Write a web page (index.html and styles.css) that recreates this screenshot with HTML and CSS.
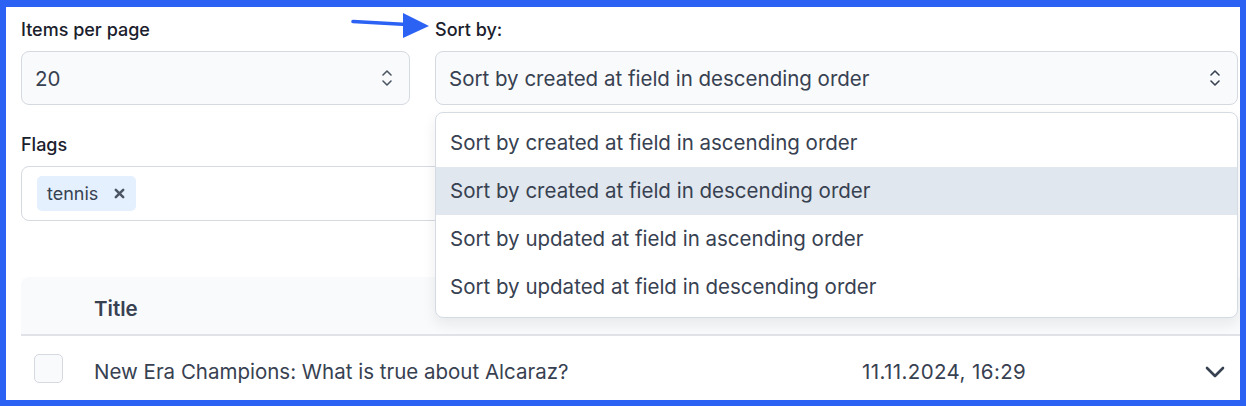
FILE: index.html
```html
<!DOCTYPE html>
<html lang="en">
<head>
<meta charset="utf-8">
<title>Sort options</title>
<link rel="stylesheet" href="styles.css">
</head>
<body>
<div class="frame">
  <div class="top">
    <div class="field">
      <label class="label">Items per page</label>
      <div class="select">
        <span class="select-value small">20</span>
        <svg class="updown" width="12" height="20" viewBox="0 0 12 20"><path d="M2 7 L6 3 L10 7 M2 13 L6 17 L10 13" fill="none" stroke="#4b5563" stroke-width="1.6" stroke-linecap="round" stroke-linejoin="round"/></svg>
      </div>
    </div>
    <div class="field">
      <label class="label">Sort by:</label>
      <div class="select">
        <span class="select-value">Sort by created at field in descending order</span>
        <svg class="updown" width="12" height="20" viewBox="0 0 12 20"><path d="M2 7 L6 3 L10 7 M2 13 L6 17 L10 13" fill="none" stroke="#374151" stroke-width="1.6" stroke-linecap="round" stroke-linejoin="round"/></svg>
      </div>
      <ul class="menu">
        <li class="opt">Sort by created at field in ascending order</li>
        <li class="opt active">Sort by created at field in descending order</li>
        <li class="opt">Sort by updated at field in ascending order</li>
        <li class="opt">Sort by updated at field in descending order</li>
      </ul>
    </div>
  </div>

  <div class="field flags">
    <label class="label">Flags</label>
    <div class="tags">
      <span class="chip">tennis<span class="chip-x">
        <svg width="11" height="11" viewBox="0 0 11 11"><path d="M1.8 1.8 L9.2 9.2 M9.2 1.8 L1.8 9.2" stroke="#4b5563" stroke-width="2.5" stroke-linecap="round"/></svg>
      </span></span>
    </div>
  </div>

  <div class="table">
    <div class="thead">
      <div class="cell-check"></div>
      <div class="th">Title</div>
    </div>
    <div class="trow">
      <div class="cell-check"><span class="checkbox"></span></div>
      <div class="td title">New Era Champions: What is true about Alcaraz?</div>
      <div class="td date">11.11.2024, 16:29</div>
      <div class="td expand">
        <svg width="20" height="12" viewBox="0 0 20 12"><path d="M2 2 L10 10 L18 2" fill="none" stroke="#374151" stroke-width="2.6" stroke-linecap="round" stroke-linejoin="round"/></svg>
      </div>
    </div>
  </div>

  <svg class="pointer" width="84" height="30" viewBox="0 0 84 30"><path d="M2 8.5 L56 11.5" stroke="#2b62f4" stroke-width="3.6" stroke-linecap="round"/><polygon points="52,0 78,13 52,25" fill="#2b62f4"/></svg>
</div>
</body>
</html>
```

FILE: styles.css
```css
* { box-sizing: border-box; }
html, body { margin: 0; padding: 0; }
body {
  font-family: Inter, "Noto Sans", "Liberation Sans", sans-serif;
  color: #1f2937;
  background: #2b62f4;
}
.frame {
  position: relative;
  width: 1246px;
  height: 406px;
  overflow: hidden;
  background: #fff;
  border: 6px solid #2b62f4;
  border-top-width: 7px;
  padding: 11px 2px 0 15px;
}
.top {
  display: grid;
  grid-template-columns: 389px 803px;
  column-gap: 25px;
}
.field { position: relative; }
.label {
  display: block;
  font-size: 18px;
  line-height: 24px;
  font-weight: 500;
  color: #1a202c;
  margin-bottom: 9px;
}
.select {
  height: 54px;
  border: 1px solid #d5d9e0;
  border-radius: 8px;
  background: #f9fafb;
  display: flex;
  align-items: center;
  justify-content: space-between;
  padding: 0 16px 0 13px;
}
.select-value {
  font-size: 20.5px;
  color: #374151;
}
.updown { flex: none; }
.menu {
  position: absolute;
  z-index: 5;
  left: 0;
  top: 94px;
  width: 803px;
  margin: 0;
  padding: 6px 0;
  list-style: none;
  background: #fff;
  border: 1px solid #d5dbe3;
  border-radius: 8px;
  box-shadow: 0 6px 14px rgba(15, 23, 42, 0.08);
}
.opt {
  height: 48px;
  line-height: 48px;
  padding-left: 14px;
  font-size: 20.5px;
  color: #374151;
}
.opt.active { background: #e1e7ee; }
.flags { margin-top: 28px; }
.tags {
  height: 55px;
  border: 1px solid #d5d9e0;
  border-radius: 8px;
  background: #fff;
  padding: 9px 15px;
  display: flex;
  align-items: flex-start;
}
.chip {
  display: inline-flex;
  align-items: center;
  height: 35px;
  padding: 0 11px 0 10px;
  background: #e4f0fd;
  border-radius: 5px;
  font-size: 18px;
  color: #374151;
}
.chip-x {
  display: inline-flex;
  margin-left: 16px;
}
.table {
  margin-top: 56px;
  margin-right: -2px;
}
.thead {
  display: flex;
  align-items: center;
  height: 59px;
  padding-top: 5px;
  background: #f9fafb;
  border-bottom: 2px solid #e0e2e7;
  border-top-left-radius: 8px;
}
.cell-check {
  width: 73px;
  flex: none;
  padding-left: 13px;
}
.th {
  font-size: 20.5px;
  font-weight: 600;
  color: #374151;
}
.trow {
  display: flex;
  align-items: center;
  padding-top: 16px;
}
.checkbox {
  display: block;
  width: 29px;
  height: 29px;
  border: 1px solid #d5d9e0;
  border-radius: 5px;
  background: #f9fafb;
}
.td {
  font-size: 20.5px;
  color: #374151;
  padding-top: 7px;
}
.title { width: 768px; flex: none; }
.date { flex: 1; letter-spacing: 0.4px; }
.expand {
  display: flex;
  padding-right: 15px;
}
.pointer {
  position: absolute;
  left: 345px;
  top: 6px;
}
```
